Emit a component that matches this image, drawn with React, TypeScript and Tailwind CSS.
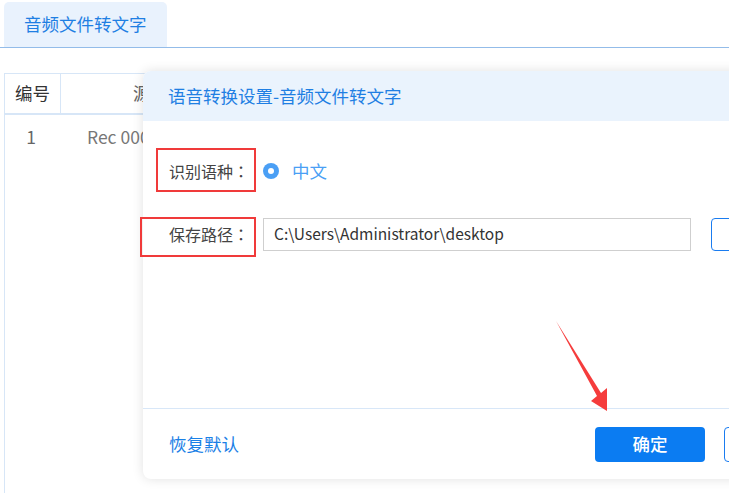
import React from "react";

const font = { fontFamily: '"Noto Sans CJK SC", "Noto Sans", sans-serif' };

function Colon() {
  return (
    <span
      className="inline-block w-[16px] text-center"
      style={{ fontFamily: '"Noto Sans CJK TC", sans-serif' }}
    >
      ：
    </span>
  );
}

export default function App() {
  return (
    <div
      className="relative w-[729px] h-[493px] overflow-hidden bg-white text-[17.5px] text-[#333] whitespace-nowrap"
      style={font}
    >
      {/* tabs */}
      <div className="flex pt-[2px] pl-[4px] border-b border-[#93bce9]">
        <div className="h-[45px] px-[20px] flex items-center rounded-t-[5px] bg-[#e9f2fd] text-[#1f7fe3]">
          音频文件转文字
        </div>
      </div>

      {/* table */}
      <div className="mt-[25px] ml-[4px] h-[430px] border-l border-[#d7e6f7]">
        <div className="flex h-[42px] border-t border-b-2 border-[#d7e6f7]">
          <div className="w-[56px] shrink-0 flex items-center justify-center border-r border-[#d7e6f7] text-[#333]">
            编号
          </div>
          <div className="flex-1 flex items-center pl-[72px] text-[#666]">源文件名称</div>
        </div>
        <div className="flex h-[44px]">
          <div className="w-[56px] shrink-0 flex items-center justify-center pr-[4px] text-[#666]">1</div>
          <div className="flex-1 flex items-center pl-[26px] text-[#777]">Rec 0001.mp3</div>
        </div>
      </div>

      {/* dialog */}
      <div className="absolute left-[143px] top-[71px] w-[720px] h-[408px] bg-white rounded-[8px] shadow-[0_0_12px_rgba(0,0,0,0.12)] flex flex-col overflow-hidden">
        <div className="h-[50px] shrink-0 bg-[#eaf3fd] flex items-center pl-[25px] text-[#1f7fe3]">
          语音转换设置-音频文件转文字
        </div>
        <div className="flex-1 flex flex-col pt-[29px] pl-[26px]">
          <div className="flex items-center h-[42px]">
            <div className="shrink-0 text-[16px] text-[#444]">
              识别语种<Colon />
            </div>
            <div className="ml-[14px] shrink-0 w-[16px] h-[16px] rounded-full bg-[#4a9ff5] flex items-center justify-center">
              <div className="w-[6px] h-[6px] rounded-full bg-white" />
            </div>
            <div className="ml-[13px] shrink-0 text-[#4a9ff5]">中文</div>
          </div>
          <div className="flex items-center h-[42px] mt-[21px]">
            <div className="shrink-0 text-[16px] text-[#444]">
              保存路径<Colon />
            </div>
            <div className="ml-[14px] shrink-0 w-[428px] h-[33px] border border-[#cfcfcf] flex items-center pl-[10px] text-[15.5px] text-[#333]">
              C:\Users\Administrator\desktop
            </div>
            <div className="ml-[20px] shrink-0 w-[80px] h-[33px] border border-[#1a7cf0] rounded-[4px]" />
          </div>
        </div>
        <div className="h-[71px] shrink-0 border-t border-[#d8e7f8] flex items-center pl-[26px]">
          <div className="shrink-0 w-[70px] text-[#1a80e6]">恢复默认</div>
          <div className="ml-[356px] shrink-0 w-[110px] h-[35px] rounded-[4px] bg-[#0b7cf2] flex items-center justify-center text-white font-medium">
            确定
          </div>
          <div className="ml-[19px] shrink-0 w-[80px] h-[35px] rounded-[4px] border border-[#1a7cf0]" />
        </div>
      </div>

      {/* annotation boxes */}
      <div className="absolute left-[156px] top-[148px] w-[100px] h-[44px] border-2 border-[#f03a3a]" />
      <div className="absolute left-[140px] top-[217px] w-[116px] h-[40px] border-2 border-[#f03a3a]" />

      {/* arrow */}
      <svg className="absolute left-0 top-0" width="729" height="493" viewBox="0 0 729 493">
        <polygon
          points="556,321 601,393 607,388 607,411 591,401 597,396"
          fill="#f53c3c"
        />
      </svg>
    </div>
  );
}
